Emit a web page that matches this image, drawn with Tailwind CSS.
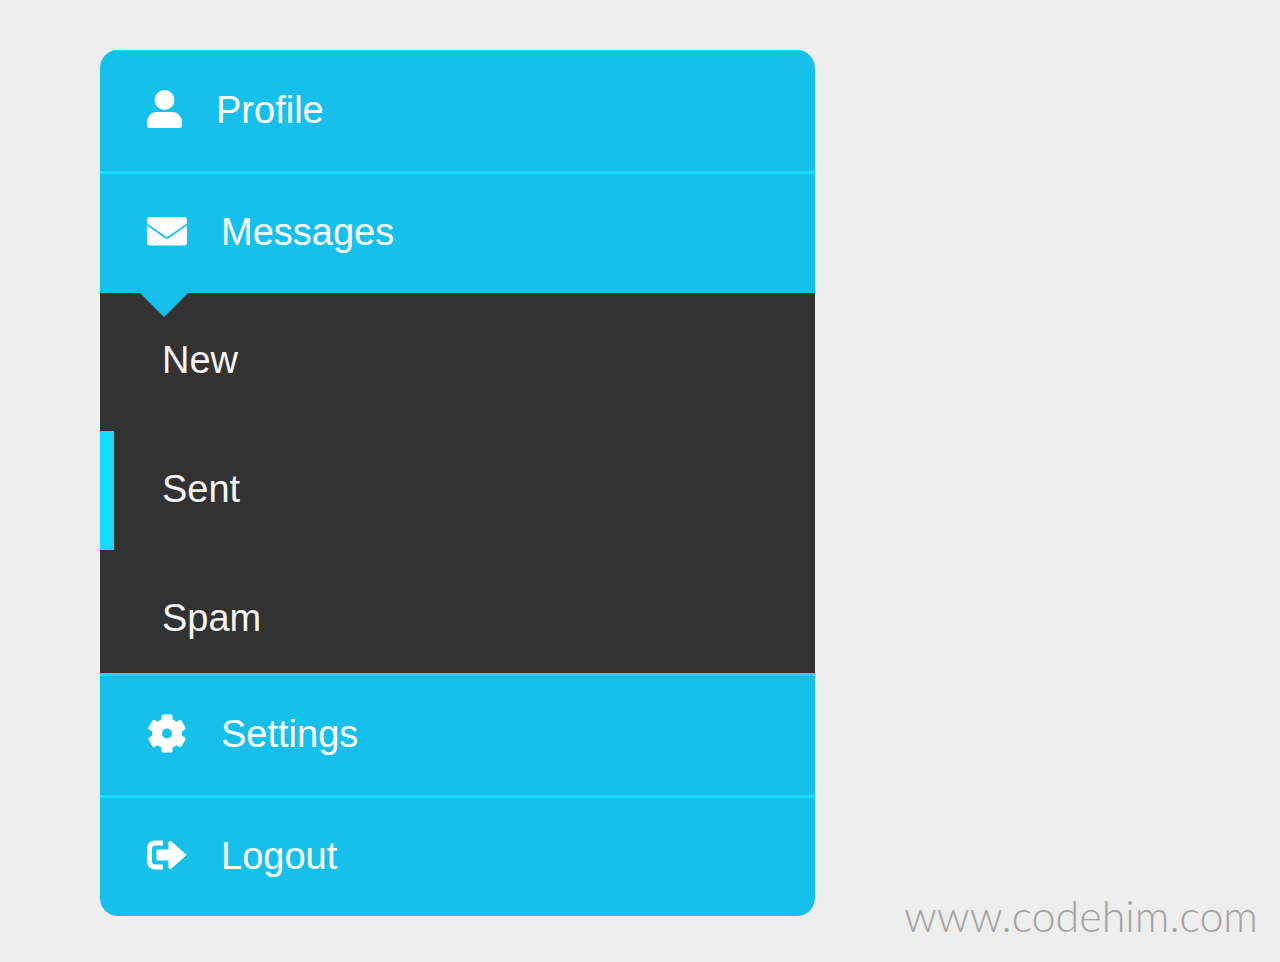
<!DOCTYPE html>
<html lang="en">
<head>
<meta charset="utf-8">
<meta name="viewport" content="width=device-width, initial-scale=1">
<title>Accordion menu</title>
<script src="https://cdn.jsdelivr.net/npm/@tailwindcss/browser@4"></script>
</head>
<body class="flex min-h-screen items-stretch bg-[#eeeeee] pt-[50px] pl-[100px] font-['Liberation_Sans',Arial,sans-serif] text-[38px] leading-[57px] text-white">
  <nav aria-label="Account" class="flex-1 self-start overflow-hidden rounded-[18px] bg-[#17c0eb]">
    <ul>
      <li>
        <a href="#profile" class="flex h-[121px] items-center gap-[34px] border-t border-[#18dcff] pb-1 pl-[47px]">
          <svg class="h-[38px] w-[35px]" viewBox="0 0 35 38" fill="currentColor" aria-hidden="true"><circle cx="17.500" cy="10" r="10"/><path d="M10 22h15c6 0 10 5 10 10v3c0 2-1 3-3 3H3c-2 0-3-1-3-3v-3c0-5 4-10 10-10z"/></svg>
          <span class="pt-0.5">Profile</span>
        </a>
      </li>
      <li>
        <div class="relative">
          <button type="button" aria-expanded="true" aria-controls="messages" class="flex h-[122px] w-full items-center gap-[34px] border-t-3 border-[#18dcff] pb-1 pl-[47px] text-left">
            <svg class="h-[30px] w-10" viewBox="0 0 40 30" aria-hidden="true"><rect width="40" height="28.500" rx="3" fill="#fff"/><path d="M0 7.500 18 20Q20 21.500 22 20L40 7.500" fill="none" stroke="#17c0eb" stroke-width="1.800"/></svg>
            <span class="pt-0.5">Messages</span>
          </button>
          <span class="absolute top-full left-10 border-x-24 border-t-24 border-x-transparent border-t-[#17c0eb]"></span>
        </div>
        <ul id="messages" class="flex flex-col gap-[10px] bg-[#323232] pt-[9px] text-[#f5f5f5]">
          <li><a href="#new" class="block pt-[30px] pb-8 pl-[62px]">New</a></li>
          <li><a href="#sent" aria-current="page" class="block border-l-14 border-[#18dcff] pt-[30px] pb-8 pl-[48px]">Sent</a></li>
          <li><a href="#spam" class="block pt-[30px] pb-[26px] pl-[62px]">Spam</a></li>
        </ul>
      </li>
      <li>
        <a href="#settings" class="flex h-[122px] items-center gap-[34px] border-t-3 border-[#18dcff] pb-1 pl-[47px]">
          <svg class="size-10" viewBox="0 0 40 40" fill="currentColor" aria-hidden="true"><defs><mask id="hub"><rect width="40" height="40" fill="#fff"/><circle cx="20" cy="19.500" r="5" fill="#000"/></mask></defs><g mask="url(#hub)"><circle cx="20" cy="19.500" r="15"/><rect x="14.500" y="0.500" width="11" height="38" rx="1.500"/><rect x="14.500" y="0.500" width="11" height="38" rx="1.500" transform="rotate(60 20 19.500)"/><rect x="14.500" y="0.500" width="11" height="38" rx="1.500" transform="rotate(120 20 19.500)"/></g></svg>
          <span class="pt-0.5">Settings</span>
        </a>
      </li>
      <li>
        <a href="#logout" class="flex h-[121px] items-center gap-[34px] border-t-3 border-[#18dcff] pb-1 pl-[47px]">
          <svg class="h-[30px] w-10" viewBox="0 0 40 30" aria-hidden="true"><path d="M16 3H8.500Q2.500 3 2.500 9V21Q2.500 27 8.500 27H16" fill="none" stroke="#fff" stroke-width="5"/><path d="M10 10H22V2L24 1.500 39 15 24 28.500 22 28V20H10Z" fill="#fff" stroke="#fff" stroke-linejoin="round"/></svg>
          <span class="pt-0.5">Logout</span>
        </a>
      </li>
    </ul>
  </nav>
  <footer class="flex w-[465px] items-end justify-end pr-[22px] pb-[18px]">
    <a href="#codehim" class="font-['Lato','Open_Sans',sans-serif] text-[43px] font-light text-[#a3a3a3]">www.codehim.com</a>
  </footer>
</body>
</html>
